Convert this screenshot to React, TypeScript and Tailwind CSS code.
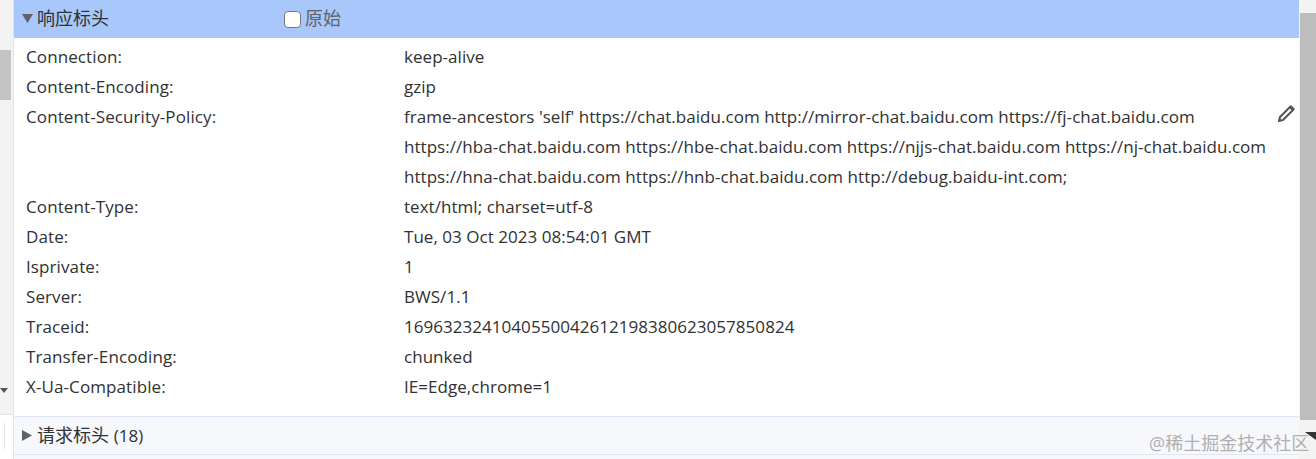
const rows: [string, string[]][] = [
  ["Connection:", ["keep-alive"]],
  ["Content-Encoding:", ["gzip"]],
  ["Content-Security-Policy:", [
    "frame-ancestors 'self' https://chat.baidu.com http://mirror-chat.baidu.com https://fj-chat.baidu.com",
    "https://hba-chat.baidu.com https://hbe-chat.baidu.com https://njjs-chat.baidu.com https://nj-chat.baidu.com",
    "https://hna-chat.baidu.com https://hnb-chat.baidu.com http://debug.baidu-int.com;",
  ]],
  ["Content-Type:", ["text/html; charset=utf-8"]],
  ["Date:", ["Tue, 03 Oct 2023 08:54:01 GMT"]],
  ["Isprivate:", ["1"]],
  ["Server:", ["BWS/1.1"]],
  ["Traceid:", ["1696323241040550042612198380623057850824"]],
  ["Transfer-Encoding:", ["chunked"]],
  ["X-Ua-Compatible:", ["IE=Edge,chrome=1"]],
];

export default function App() {
  return (
    <div className="relative w-[1316px] h-[459px] overflow-hidden flex bg-white text-[17px] text-[#303133] font-['Open_Sans','Noto_Sans_CJK_SC',sans-serif]">
      <div className="w-[14px] shrink-0 flex flex-col bg-[#f3f3f3] border-r border-[#e4e4e4]">
        <div className="h-[50px] shrink-0" />
        <div className="h-[50px] shrink-0 w-[11px] bg-[#c4c4c4]" />
        <div className="flex-1 relative">
          <svg width="8" height="6" viewBox="0 0 8 6" className="absolute left-0 bottom-[20px]"><path d="M0 0h8L4 5z" fill="#555" /></svg>
        </div>
        <div className="h-[45px] shrink-0 bg-white border-t border-[#e4e4f0] flex pl-[4px] pt-[8px] pb-[10px]">
          <div className="w-px bg-[#e4e4e4]" />
        </div>
      </div>
      <div className="flex-1 flex flex-col min-w-0">
        <div className="h-[38px] shrink-0 bg-[#a8c7fa] flex items-center pl-[8px] pb-[2px]">
          <svg width="11" height="10" viewBox="0 0 11 10" className="shrink-0"><path d="M0 1h11L5.5 10z" fill="#5f6368" /></svg>
          <span className="ml-[4px] text-[18px]">响应标头</span>
          <label className="ml-[175px] flex items-center text-[18px] text-[#5f6368]">
            <span className="w-[17px] h-[17px] bg-white rounded-[4px] border border-[#767676] mr-[4px] mt-[2px]" />
            原始
          </label>
        </div>
        <div className="flex-1 pt-[4px] relative">
          {rows.map(([k, v]) => (
            <div key={k} className="flex pl-[12px] leading-[30px]">
              <div className="w-[378px] shrink-0 tracking-[0.1px]">{k}</div>
              <div className="whitespace-nowrap tracking-[0.04px]">
                {v.map((l) => <div key={l}>{l}</div>)}
              </div>
            </div>
          ))}
          <svg width="20" height="20" viewBox="0 0 20 20" className="absolute right-[3px] top-[66px]" fill="none">
            <path d="M3 17l1-4L14 3l3 3L7 16z" stroke="#55585c" strokeWidth="2.2" strokeLinejoin="round" />
            <path d="M13 3l2-2 4 4-2 2z" fill="#55585c" />
          </svg>
        </div>
        <div className="h-[39px] shrink-0 border-y border-[#e3e5f5] bg-[#f7f8fc] flex items-center pl-[8px]">
          <svg width="11" height="11" viewBox="0 0 11 11" className="shrink-0"><path d="M0 0v11l10-5.5z" fill="#5f6368" /></svg>
          <span className="ml-[4px] text-[18px]">请求标头 <span className="text-[17px]">(18)</span></span>
        </div>
        <div className="h-[4px] shrink-0 bg-[#f7f8fc]" />
      </div>
      <div className="w-[17px] shrink-0 flex flex-col bg-[#f3f3f3] relative">
        <div className="h-[13px] shrink-0" />
        <div className="h-[407px] shrink-0 ml-[1px] bg-[#bdbdbd]" />
        <div className="absolute right-0 bottom-[19px]">
          <svg width="11" height="8" viewBox="0 0 11 8"><path d="M0 0h11v8z" fill="#333" /></svg>
        </div>
      </div>
      <div className="absolute left-[1149px] top-[430px] text-[18px] leading-[26px] text-[#b0b0b0] whitespace-nowrap">@稀土掘金技术社区</div>
    </div>
  );
}
